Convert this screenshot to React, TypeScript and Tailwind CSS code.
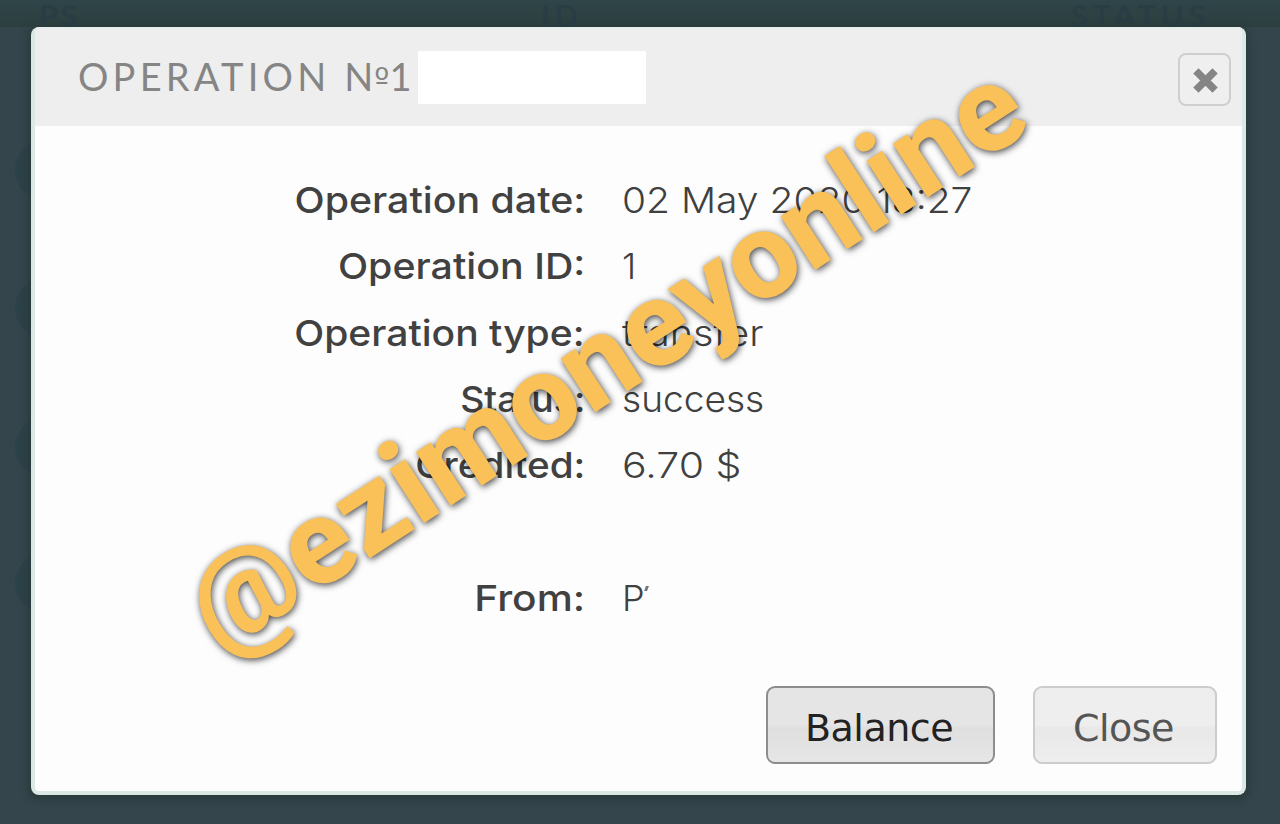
import type { ReactNode } from "react";

type Row = { label: string; value: string; labelClass: string; valueClass: string };

const rows: Row[] = [
  { label: "Operation date:", value: "02 May 2020 18:27", labelClass: "scale-x-[1.092]", valueClass: "scale-x-[1.083]" },
  { label: "Operation ID:", value: "1", labelClass: "scale-x-[1.093]", valueClass: "" },
  { label: "Operation type:", value: "transfer", labelClass: "scale-x-[1.085]", valueClass: "scale-x-[1.1]" },
  { label: "Status:", value: "success", labelClass: "scale-x-[1.04]", valueClass: "scale-x-[1.03]" },
  { label: "Credited:", value: "6.70 $", labelClass: "scale-x-[1.075]", valueClass: "scale-x-[1.14]" },
  { label: "", value: "", labelClass: "", valueClass: "" },
  { label: "From:", value: "P", labelClass: "scale-x-[1.13]", valueClass: "" },
];

function DialogButton({ className, children }: { className: string; children: ReactNode }) {
  return (
    <button
      className={`flex h-[78px] items-center justify-center rounded-[9px] border-2 pt-1.5 pr-[3px] font-['DejaVu_Sans',sans-serif] text-[38px] leading-none tracking-[-0.5px] ${className}`}
    >
      {children}
    </button>
  );
}

export default function App() {
  return (
    <div className="relative h-[824px] w-[1280px] overflow-hidden bg-[#34464c] pt-[27px] pl-[31px]">
      <div className="absolute inset-x-0 top-0 h-[27px] bg-linear-to-b from-[#2f4549] to-[#2d3f3f] font-['Lato',sans-serif] text-[31px] leading-none font-bold tracking-[2px] text-[#2a3d44]">
        <span className="absolute top-0 left-[39px]">PS</span>
        <span className="absolute top-0 left-[541px] tracking-[4px]">ID</span>
        <span className="absolute top-0 left-[1071px] tracking-[4.6px]">STATUS</span>
      </div>
      <div className="absolute top-[140px] left-[15px] h-[60px] w-[60px] rounded-full bg-[#2c4148]" />
      <div className="absolute top-[278px] left-[15px] h-[60px] w-[60px] rounded-full bg-[#2c4148]" />
      <div className="absolute top-[417px] left-[15px] h-[60px] w-[60px] rounded-full bg-[#2c4148]" />
      <div className="absolute top-[553px] left-[15px] h-[60px] w-[60px] rounded-full bg-[#2c4148]" />

      <div className="relative flex h-[768px] w-[1215px] flex-col overflow-hidden rounded-[8px] border-r-4 border-b-4 border-l-4 border-[#dce8e3] bg-[#fdfdfd] shadow-[0_2px_7px_3px_#293b3b]">
        <header className="flex h-[99px] shrink-0 items-center border-t-2 border-[#e6eeec] bg-[#eeeeee] pr-[11px] pb-[2px] pl-[43px]">
          <h1 className="w-[340px] font-['Lato',sans-serif] text-[38px] leading-none font-normal tracking-[4.2px] whitespace-nowrap text-[#858585]">
            OPERATION <span className="tracking-[0px]">N</span>
            <span className="ml-px font-['DejaVu_Sans',sans-serif] text-[32px] leading-none tracking-[0px]">º</span>1
          </h1>
          <div className="mt-[2px] h-[53px] w-[228px] bg-white" />
          <button
            aria-label="Close dialog"
            className="mt-[5px] ml-auto flex size-[53px] items-center justify-center rounded-[8px] border-2 border-[#cfcfcf] bg-[#efefef]"
          >
            <svg viewBox="0 0 26 26" className="mt-[2px] ml-[2px] size-[25px]" fill="none" stroke="#858585" strokeWidth="7.8">
              <path d="M3 3 L23 23 M23 3 L3 23" />
            </svg>
          </button>
        </header>

        <dl className="mt-[41px] flex flex-col font-['Inter',sans-serif] text-[36px] leading-none">
          {rows.map((row, i) => (
            <div key={i} className="flex h-[66.3px] items-center">
              <dt className="w-[550px] text-right font-medium whitespace-pre text-[#414141]">
                <span className={`inline-block origin-right ${row.labelClass}`}>{row.label}</span>
              </dt>
              <dd className="ml-[37px] font-[350] whitespace-pre text-[#404040]">
                <span className={`inline-block origin-left ${row.valueClass}`}>{row.value}</span>
                {row.label === "From:" && (
                  <span className="inline-block h-[5px] w-[3px] -translate-y-[20px] skew-x-[-20deg] bg-[#777]" />
                )}
              </dd>
            </div>
          ))}
        </dl>

        <footer className="mt-auto mb-[27px] flex justify-end gap-[38px] pr-[25px]">
          <DialogButton className="w-[229px] border-[#8d8d8d] bg-linear-to-b from-[#e5e5e5] from-50% via-[#dfdfdf] via-54% to-[#e6e6e6] to-100% text-[#222222]">
            Balance
          </DialogButton>
          <DialogButton className="w-[184px] border-[#cccccc] bg-linear-to-b from-[#eeeeee] from-50% via-[#e8e8e8] via-54% to-[#eeeeee] to-100% text-[#555555]">
            Close
          </DialogButton>
        </footer>
      </div>

      <div className="pointer-events-none absolute top-[554px] left-[220px] origin-[0_101px] rotate-[-32.9deg] font-['Roboto',sans-serif] text-[121px] leading-none font-extrabold whitespace-nowrap text-[#fac158] [text-shadow:0_2px_7px_rgba(0,0,0,0.75)]">
        @ezimoneyonline
      </div>
    </div>
  );
}
